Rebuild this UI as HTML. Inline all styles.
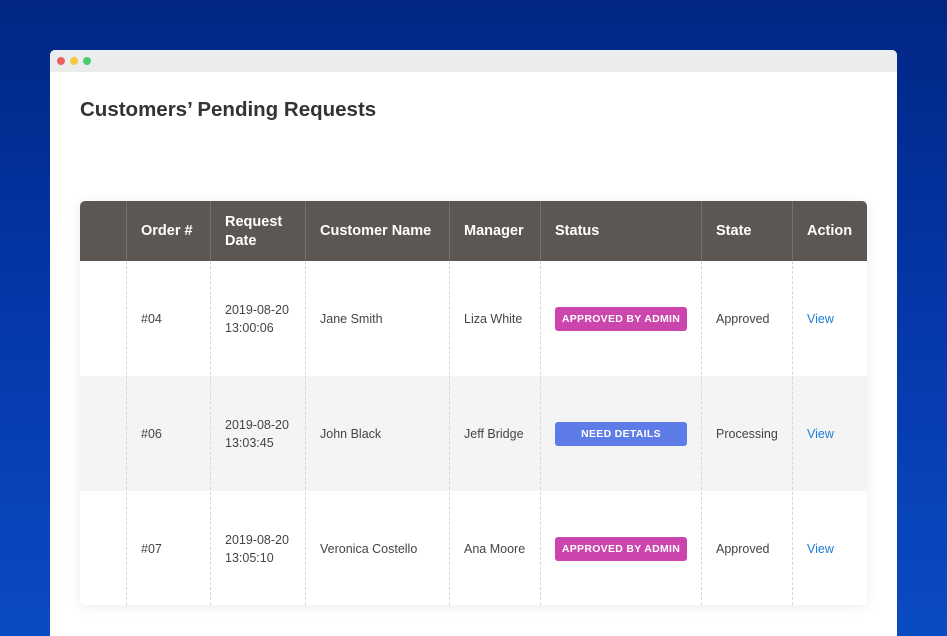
<!DOCTYPE html>
<html style="background:#0a4bc4"><head><style>
html,body{margin:0;width:947px;height:636px;overflow:hidden}
body{background:linear-gradient(180deg,#012684 0%,#0436a6 45%,#0a4bc4 100%);font-family:"Liberation Sans",sans-serif;position:relative}
.win{position:absolute;left:50px;top:50px;width:847px;height:586px;background:#fff;border-radius:5px 5px 0 0;overflow:hidden}
.bar{height:22px;background:#ebecee;position:relative}
.d{position:absolute;top:7px;width:8px;height:8px;border-radius:50%}
h1{position:absolute;left:30px;top:48px;margin:0;font-size:20.5px;font-weight:bold;color:#333}
.tbl{position:absolute;left:30px;top:151px;width:787px;height:404px;border-radius:5px;overflow:hidden;box-shadow:0 2px 12px rgba(0,0,0,.08)}
.hd{position:absolute;left:0;top:0;width:787px;height:60px;background:#5c5753}
.row{position:absolute;left:0;width:787px;height:115px}
.c{position:absolute;font-size:12.5px;color:#444;line-height:18px}
.h{position:absolute;font-size:14.5px;font-weight:bold;color:#fff;line-height:19px}
.vl{position:absolute;top:0;height:404px;border-left:1px dashed #d6d6d6}
.vh{position:absolute;top:0;height:60px;border-left:1px solid #77716d}
.b{position:absolute;width:132px;height:24px;border-radius:3px;color:#fff;font-size:10.5px;font-weight:bold;text-align:center;line-height:24px;letter-spacing:.3px}
.v{color:#1a7fd9}
</style></head><body>
<div class="win">
<div class="bar"><div class="d" style="left:7px;background:#ef5f5f"></div><div class="d" style="left:20px;background:#f6c843"></div><div class="d" style="left:33px;background:#4ccb6a"></div></div>
<h1>Customers’ Pending Requests</h1>
<div class="tbl">
<div class="hd"></div>
<div class="row" style="top:60px;background:#fff"></div>
<div class="row" style="top:175px;background:#f4f4f4"></div>
<div class="row" style="top:290px;background:#fff"></div>
<div class="vl" style="left:46px"></div><div class="vl" style="left:130px"></div><div class="vl" style="left:225px"></div><div class="vl" style="left:369px"></div><div class="vl" style="left:460px"></div><div class="vl" style="left:621px"></div><div class="vl" style="left:712px"></div>
<div class="vh" style="left:46px"></div><div class="vh" style="left:130px"></div><div class="vh" style="left:225px"></div><div class="vh" style="left:369px"></div><div class="vh" style="left:460px"></div><div class="vh" style="left:621px"></div><div class="vh" style="left:712px"></div>
<div class="h" style="left:61px;top:21px">Order #</div>
<div class="h" style="left:145px;top:12px">Request<br>Date</div>
<div class="h" style="left:240px;top:21px">Customer Name</div>
<div class="h" style="left:384px;top:21px">Manager</div>
<div class="h" style="left:475px;top:21px">Status</div>
<div class="h" style="left:636px;top:21px">State</div>
<div class="h" style="left:727px;top:21px">Action</div>

<div class="c" style="left:61px;top:109px">#04</div>
<div class="c" style="left:145px;top:100px">2019-08-20<br>13:00:06</div>
<div class="c" style="left:240px;top:109px">Jane Smith</div>
<div class="c" style="left:384px;top:109px">Liza White</div>
<div class="b" style="left:475px;top:106px;background:#cc45ad">APPROVED BY ADMIN</div>
<div class="c" style="left:636px;top:109px">Approved</div>
<div class="c v" style="left:727px;top:109px">View</div>

<div class="c" style="left:61px;top:224px">#06</div>
<div class="c" style="left:145px;top:215px">2019-08-20<br>13:03:45</div>
<div class="c" style="left:240px;top:224px">John Black</div>
<div class="c" style="left:384px;top:224px">Jeff Bridge</div>
<div class="b" style="left:475px;top:221px;background:#5e7ce8">NEED DETAILS</div>
<div class="c" style="left:636px;top:224px">Processing</div>
<div class="c v" style="left:727px;top:224px">View</div>

<div class="c" style="left:61px;top:339px">#07</div>
<div class="c" style="left:145px;top:330px">2019-08-20<br>13:05:10</div>
<div class="c" style="left:240px;top:339px">Veronica Costello</div>
<div class="c" style="left:384px;top:339px">Ana Moore</div>
<div class="b" style="left:475px;top:336px;background:#cc45ad">APPROVED BY ADMIN</div>
<div class="c" style="left:636px;top:339px">Approved</div>
<div class="c v" style="left:727px;top:339px">View</div>
</div>
</div>
</body></html>
